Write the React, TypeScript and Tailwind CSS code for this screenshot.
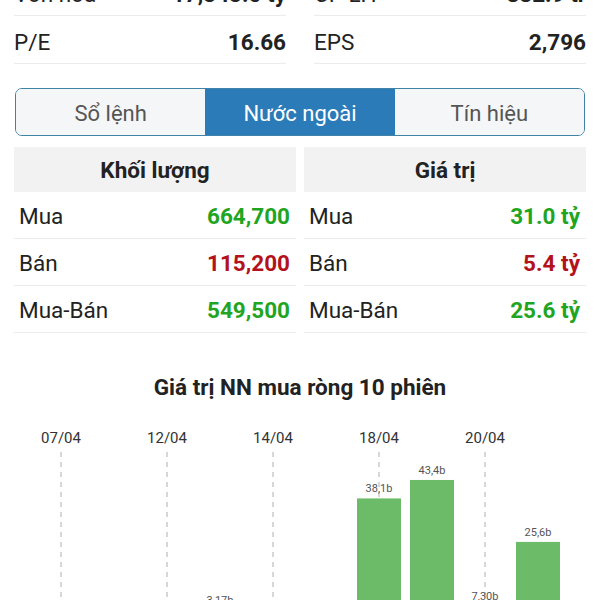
import React from "react";

const green = "text-[#1fa51f]";
const red = "text-[#b3121b]";

function InfoRow({ label, value }: { label: string; value: string }) {
  return (
    <div className="flex h-[48px] items-center justify-between border-b border-[#ececec] pt-[6px]">
      <span className="text-[22.5px] text-[#222]">{label}</span>
      <span className="text-[22.5px] font-bold text-[#222]">{value}</span>
    </div>
  );
}

function Table({
  title,
  rows,
}: {
  title: string;
  rows: { label: string; value: string; color: string }[];
}) {
  return (
    <div className="flex-1">
      <div className="flex h-[45px] items-center justify-center bg-[#f2f2f2] pt-[2px] text-[22.5px] font-bold text-[#222]">
        {title}
      </div>
      {rows.map((r) => (
        <div
          key={r.label}
          className="flex h-[47px] items-center justify-between border-b border-[#ececec] pl-[5px] pr-[6px] pt-[3px]"
        >
          <span className="text-[22.5px] text-[#222]">{r.label}</span>
          <span className={`text-[22.5px] font-bold ${r.color}`}>{r.value}</span>
        </div>
      ))}
    </div>
  );
}

const centers = [61, 114, 167, 220, 273, 326, 379, 432, 485, 538];
const dates: Record<number, string> = { 0: "07/04", 2: "12/04", 4: "14/04", 6: "18/04", 8: "20/04" };
const bars: { i: number; v: number; label: string }[] = [
  { i: 3, v: -1, label: "3,17b" },
  { i: 6, v: 38.1, label: "38,1b" },
  { i: 7, v: 43.4, label: "43,4b" },
  { i: 8, v: 7.3, label: "7,30b" },
  { i: 9, v: 25.6, label: "25,6b" },
];

function Chart() {
  const base = 211;
  const k = 3.48;
  return (
    <svg width={600} height={200} className="block">
      {Object.entries(dates).map(([i, d]) => {
        const c = centers[Number(i)];
        return (
          <g key={d}>
            <text x={c} y={23} textAnchor="middle" fontSize={15} fill="#333" fontFamily="Roboto">
              {d}
            </text>
            <line x1={c} y1={32} x2={c} y2={200} stroke="#b0b0b0" strokeWidth={1} strokeDasharray="5 5" />
          </g>
        );
      })}
      {bars.map((b) => {
        const c = centers[b.i];
        const h = Math.max(b.v, 0) * k;
        const top = base - h;
        return (
          <g key={b.i}>
            {b.v > 0 && <rect x={c - 22} y={top} width={44} height={h} fill="#6cbb69" />}
            <text
              x={c}
              y={b.v > 0 ? top - 6 : 184}
              textAnchor="middle"
              fontSize={11}
              fill="#555"
              fontFamily="Roboto"
            >
              {b.label}
            </text>
          </g>
        );
      })}
    </svg>
  );
}

export default function App() {
  return (
    <div className="h-[600px] w-[600px] overflow-hidden bg-white font-['Roboto',sans-serif]">
      <div className="mt-[-32px] flex gap-[28px] px-[14px]">
        <div className="flex-1">
          <InfoRow label="Vốn hóa" value="17,343.0 tỷ" />
          <InfoRow label="P/E" value="16.66" />
        </div>
        <div className="flex-1">
          <InfoRow label="CP LH" value="882.9 tr" />
          <InfoRow label="EPS" value="2,796" />
        </div>
      </div>

      <div className="mx-[15px] mt-[24px] flex h-[48px] overflow-hidden rounded-[7px] border-[1.5px] border-[#3f84a6]">
        <div className="flex flex-1 items-center justify-center bg-[#f4f6f8] pt-[2px] text-[22px] text-[#555]">
          Sổ lệnh
        </div>
        <div className="flex flex-1 items-center justify-center bg-[#2a7bb8] pt-[2px] text-[22px] text-white">
          Nước ngoài
        </div>
        <div className="flex flex-1 items-center justify-center bg-[#f4f6f8] pt-[2px] text-[22px] text-[#555]">
          Tín hiệu
        </div>
      </div>

      <div className="mt-[11px] flex gap-[8px] px-[14px]">
        <Table
          title="Khối lượng"
          rows={[
            { label: "Mua", value: "664,700", color: green },
            { label: "Bán", value: "115,200", color: red },
            { label: "Mua-Bán", value: "549,500", color: green },
          ]}
        />
        <Table
          title="Giá trị"
          rows={[
            { label: "Mua", value: "31.0 tỷ", color: green },
            { label: "Bán", value: "5.4 tỷ", color: red },
            { label: "Mua-Bán", value: "25.6 tỷ", color: green },
          ]}
        />
      </div>

      <div className="mt-[40px] h-[28px] text-center text-[22.5px] font-bold leading-[28px] text-[#222]">
        Giá trị NN mua ròng 10 phiên
      </div>
      <div className="mt-[19px]">
        <Chart />
      </div>
    </div>
  );
}
